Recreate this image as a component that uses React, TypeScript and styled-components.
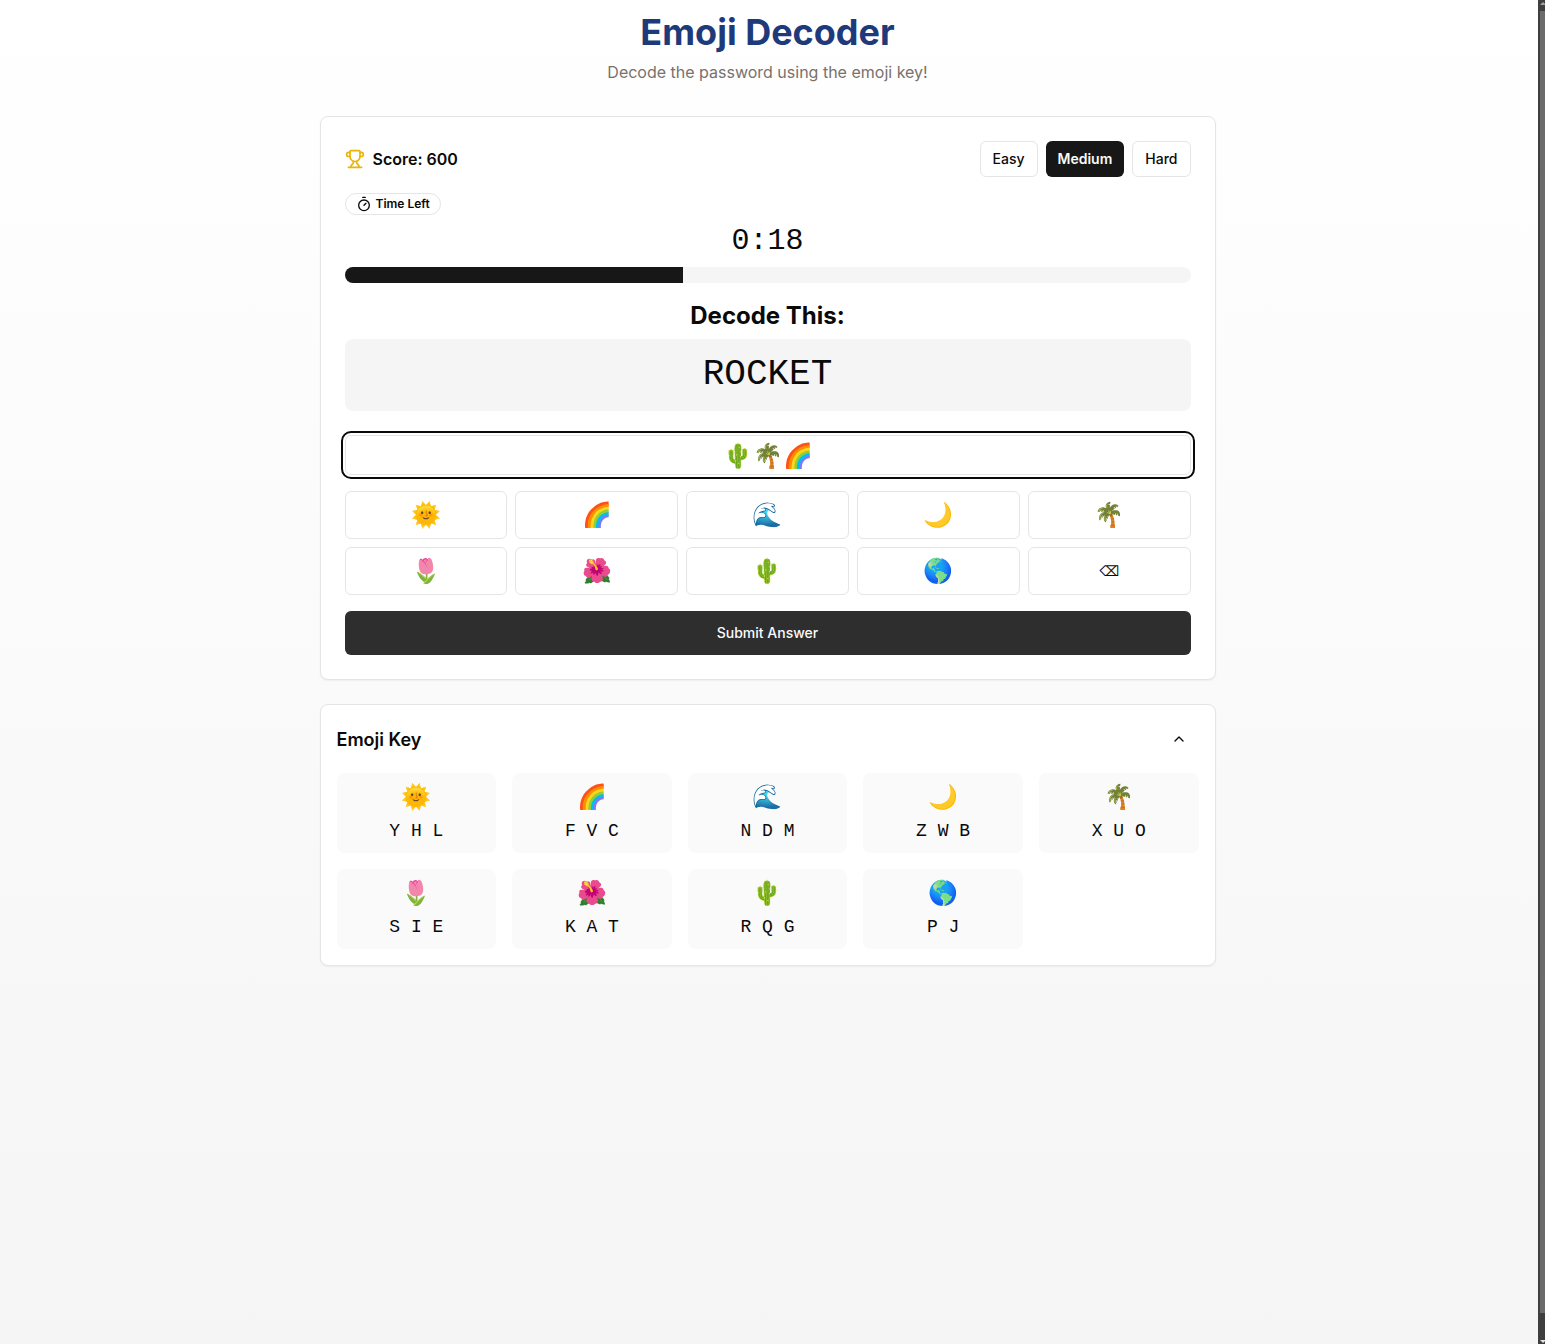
import React from 'react';
import styled, { createGlobalStyle } from 'styled-components';
import { Trophy, Timer, ChevronUp } from 'lucide-react';

const GlobalStyle = createGlobalStyle`
  html, body {
    margin: 0;
    padding: 0;
  }

  body {
    font-family: Inter, "Noto Sans", sans-serif;
    color: #0a0a0a;
  }

  * {
    box-sizing: border-box;
  }
`;

const Shell = styled.div`
  display: flex;
  height: 1344px;
  overflow: hidden;
`;

const Page = styled.main`
  flex: 1;
  padding-right: 3px;
  background: linear-gradient(to bottom, #ffffff 0%, #f5f5f5 100%);
`;

const ScrollTrack = styled.div`
  position: relative;
  width: 7px;
  padding: 11px 0 31px 2px;
  background: #3f3f3f;

  &::before,
  &::after {
    content: '';
    position: absolute;
    left: 2px;
    border-left: 3px solid transparent;
    border-right: 3px solid transparent;
  }

  &::before {
    top: 2px;
    border-bottom: 3px solid #a3a3a3;
  }

  &::after {
    bottom: 1px;
    border-top: 3px solid #e5e5e5;
  }
`;

const ScrollThumb = styled.div`
  height: 100%;
  background: #6b6b6b;
`;

const Container = styled.div`
  width: 896px;
  margin: 0 auto;
`;

const Header = styled.header`
  text-align: center;
  margin-bottom: 32px;
`;

const Title = styled.h1`
  margin: 0;
  padding-top: 12px;
  font-size: 36px;
  line-height: 40px;
  font-weight: 700;
  color: #1e3a7a;
`;

const Subtitle = styled.p`
  margin: 8px 0 0;
  font-size: 16px;
  line-height: 24px;
  color: #78716c;
`;

const Card = styled.section`
  background: #fff;
  border: 1px solid #e5e5e5;
  border-radius: 8px;
  box-shadow: 0 1px 2px rgba(0, 0, 0, 0.05);
  padding: 24px;
  margin-bottom: 24px;
`;

const TopRow = styled.div`
  display: flex;
  justify-content: space-between;
  align-items: center;
  margin-bottom: 16px;
`;

const Score = styled.div`
  display: flex;
  align-items: center;
  gap: 8px;
  font-size: 16px;
  line-height: 24px;
  font-weight: 600;

  svg {
    color: #eab308;
  }
`;

const Levels = styled.div`
  display: flex;
  gap: 8px;
`;

const LevelButton = styled.button<{ $active?: boolean }>`
  height: 36px;
  padding: 0 12px;
  border: ${p => (p.$active ? '0' : '1px solid #e5e5e5')};
  border-radius: 6px;
  background: ${p => (p.$active ? '#171717' : '#fff')};
  color: ${p => (p.$active ? '#fafafa' : '#0a0a0a')};
  font-family: inherit;
  font-size: 14px;
  line-height: 20px;
  font-weight: ${p => (p.$active ? 600 : 500)};
`;

const Badge = styled.div`
  display: inline-flex;
  align-items: center;
  gap: 4px;
  height: 22px;
  padding: 0 10px;
  border: 1px solid #e5e5e5;
  border-radius: 999px;
  font-size: 12px;
  line-height: 16px;
  font-weight: 600;
`;

const BadgeRow = styled.div`
  display: flex;
  margin-bottom: 8px;
`;

const Clock = styled.div`
  text-align: center;
  font-family: "Liberation Mono", monospace;
  font-size: 30px;
  line-height: 36px;
  margin-bottom: 8px;
`;

const Progress = styled.div`
  height: 16px;
  border-radius: 999px;
  background: #f5f5f5;
  overflow: hidden;
  margin-bottom: 16px;
`;

const ProgressFill = styled.div`
  height: 100%;
  background: #171717;
`;

const Heading = styled.h2`
  margin: 0 0 6px;
  text-align: center;
  font-size: 24px;
  line-height: 34px;
  font-weight: 700;
`;

const Word = styled.div`
  height: 72px;
  margin-bottom: 24px;
  border-radius: 8px;
  background: #f5f5f5;
  text-align: center;
  font-family: "Liberation Mono", monospace;
  font-size: 36px;
  line-height: 72px;
`;

const AnswerField = styled.div`
  height: 40px;
  margin-bottom: 16px;
  border: 1px solid #e5e5e5;
  border-radius: 6px;
  outline: 2px solid #0a0a0a;
  outline-offset: 2px;
  text-align: center;
  font-size: 24px;
  line-height: 40px;
`;

const Keypad = styled.div`
  display: grid;
  grid-template-columns: repeat(5, 1fr);
  gap: 8px;
  margin-bottom: 16px;
`;

const KeyButton = styled.button`
  height: 48px;
  border: 1px solid #e5e5e5;
  border-radius: 6px;
  background: #fff;
  color: #0a0a0a;
  font-family: inherit;
  font-size: 24px;
  line-height: 32px;
  padding: 0;
`;

const BackspaceKey = styled(KeyButton)`
  font-family: "DejaVu Sans", sans-serif;
  font-size: 14px;
`;

const Submit = styled.button`
  display: block;
  width: 100%;
  height: 44px;
  border: 0;
  border-radius: 6px;
  background: #2e2e2e;
  color: #fafafa;
  font-family: inherit;
  font-size: 14px;
  line-height: 20px;
  font-weight: 500;
`;

const KeyCard = styled(Card)`
  padding: 16px;
  margin-bottom: 0;
`;

const KeyHeader = styled.div`
  display: flex;
  justify-content: space-between;
  align-items: center;
  height: 36px;
  margin-bottom: 16px;
`;

const KeyTitle = styled.h3`
  margin: 0;
  font-size: 18px;
  font-weight: 600;
`;

const Collapse = styled.button`
  display: flex;
  align-items: center;
  justify-content: center;
  width: 40px;
  height: 36px;
  border: 0;
  background: none;
  color: #0a0a0a;
  padding: 0;
`;

const KeyGrid = styled.div`
  display: grid;
  grid-template-columns: repeat(5, 1fr);
  gap: 16px;
`;

const KeyTile = styled.div`
  height: 80px;
  padding-top: 8px;
  border-radius: 8px;
  background: #fafafa;
  text-align: center;
`;

const TileEmoji = styled.div`
  font-size: 24px;
  line-height: 32px;
  margin-bottom: 4px;
`;

const TileLetters = styled.div`
  font-family: "Liberation Mono", monospace;
  font-size: 18px;
  line-height: 28px;
`;

const emojiKey = [
  { emoji: '🌞', letters: 'Y H L' },
  { emoji: '🌈', letters: 'F V C' },
  { emoji: '🌊', letters: 'N D M' },
  { emoji: '🌙', letters: 'Z W B' },
  { emoji: '🌴', letters: 'X U O' },
  { emoji: '🌷', letters: 'S I E' },
  { emoji: '🌺', letters: 'K A T' },
  { emoji: '🌵', letters: 'R Q G' },
  { emoji: '🌎', letters: 'P J' },
];

const App = () => {
  return (
    <Shell>
      <GlobalStyle />
      <Page>
        <Container>
          <Header>
            <Title>Emoji Decoder</Title>
            <Subtitle>Decode the password using the emoji key!</Subtitle>
          </Header>

          <Card>
            <TopRow>
              <Score>
                <Trophy size={20} />
                Score: 600
              </Score>
              <Levels>
                <LevelButton>Easy</LevelButton>
                <LevelButton $active>Medium</LevelButton>
                <LevelButton>Hard</LevelButton>
              </Levels>
            </TopRow>

            <BadgeRow>
              <Badge>
                <Timer size={16} />
                Time Left
              </Badge>
            </BadgeRow>
            <Clock>0:18</Clock>
            <Progress>
              <ProgressFill style={{ width: '40%' }} />
            </Progress>

            <Heading>Decode This:</Heading>
            <Word>ROCKET</Word>

            <AnswerField>🌵🌴🌈</AnswerField>

            <Keypad>
              {emojiKey.map(item => (
                <KeyButton key={item.emoji}>{item.emoji}</KeyButton>
              ))}
              <BackspaceKey>⌫</BackspaceKey>
            </Keypad>

            <Submit>Submit Answer</Submit>
          </Card>

          <KeyCard>
            <KeyHeader>
              <KeyTitle>Emoji Key</KeyTitle>
              <Collapse>
                <ChevronUp size={16} />
              </Collapse>
            </KeyHeader>
            <KeyGrid>
              {emojiKey.map(item => (
                <KeyTile key={item.emoji}>
                  <TileEmoji>{item.emoji}</TileEmoji>
                  <TileLetters>{item.letters}</TileLetters>
                </KeyTile>
              ))}
            </KeyGrid>
          </KeyCard>
        </Container>
      </Page>
      <ScrollTrack>
        <ScrollThumb />
      </ScrollTrack>
    </Shell>
  );
};

export default App;
